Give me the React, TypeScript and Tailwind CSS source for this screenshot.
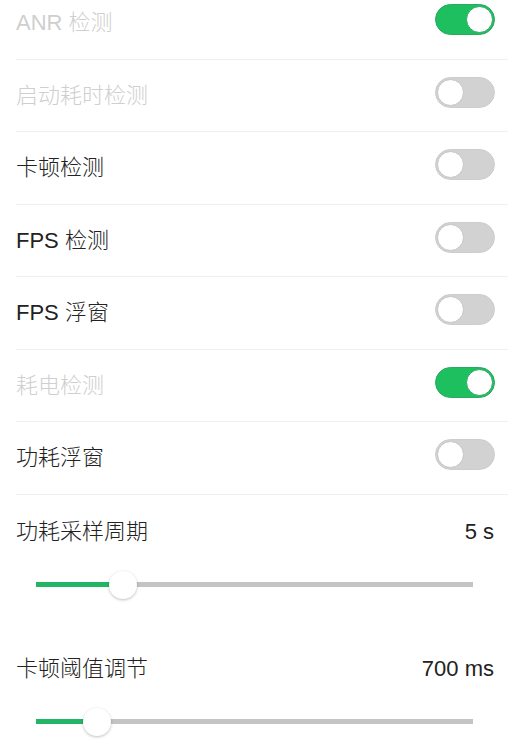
import { useState } from "react";

type ToggleRow = { label: string; on: boolean; disabled?: boolean };

const rows: ToggleRow[] = [
  { label: "ANR 检测", on: true, disabled: true },
  { label: "启动耗时检测", on: false, disabled: true },
  { label: "卡顿检测", on: false },
  { label: "FPS 检测", on: false },
  { label: "FPS 浮窗", on: false },
  { label: "耗电检测", on: true, disabled: true },
  { label: "功耗浮窗", on: false },
];

const Toggle = ({ on, onClick }: { on: boolean; onClick: () => void }) => (
  <button
    onClick={onClick}
    className={`relative h-[31px] w-[60px] shrink-0 rounded-full border ${
      on ? "bg-[#1dbf5e] border-[#2ba862]" : "bg-[#d2d2d2] border-[#cdcdcd]"
    }`}
  >
    <span
      className={`absolute top-[1px] h-[27px] w-[27px] rounded-full bg-white border ${
        on ? "right-[1px] border-[#2ba862]" : "left-[1px] border-[#c4c4c4]"
      }`}
    />
  </button>
);

const Slider = ({ label, value, percent }: { label: string; value: string; percent: number }) => (
  <div className="h-[137px] pl-4 pr-[14px]">
    <div className="h-[74px] flex items-center justify-between text-[22px] font-light text-[#222]">
      <span>{label}</span>
      <span>{value}</span>
    </div>
    <div className="h-8 ml-5 mr-[21px] flex items-center">
      <div className="relative h-[5px] w-full bg-[#c4c4c4]">
        <div className="absolute left-0 top-0 h-full bg-[#23b566]" style={{ width: `${percent}%` }} />
        <div
          className="absolute top-1/2 h-[28px] w-[28px] -translate-x-1/2 -translate-y-1/2 rounded-full bg-white shadow-[0_1px_3px_rgba(0,0,0,0.25)]"
          style={{ left: `${percent}%` }}
        />
      </div>
    </div>
  </div>
);

const App = () => {
  const [state, setState] = useState(rows.map((r) => r.on));

  return (
    <div
      className="bg-white w-[508px] h-[742px] overflow-hidden"
      style={{ fontFamily: '"Liberation Sans", "Noto Sans CJK SC", sans-serif' }}
    >
      <div className="-mt-[13px]">
        {rows.map((r, i) => (
          <div key={r.label} className="ml-4 h-[72.5px] flex items-center border-b border-[#efefef]">
            <span
              className={`flex-1 text-[22px] font-light ${r.disabled ? "text-[#cfcfcf]" : "text-[#222]"}`}
            >
              {r.label}
            </span>
            <div className="mr-[13px]">
              <Toggle on={state[i]} onClick={() => setState(state.map((v, j) => (j === i ? !v : v)))} />
            </div>
          </div>
        ))}
        <Slider label="功耗采样周期" value="5 s" percent={20} />
        <Slider label="卡顿阈值调节" value="700 ms" percent={14} />
      </div>
    </div>
  );
};

export default App;
